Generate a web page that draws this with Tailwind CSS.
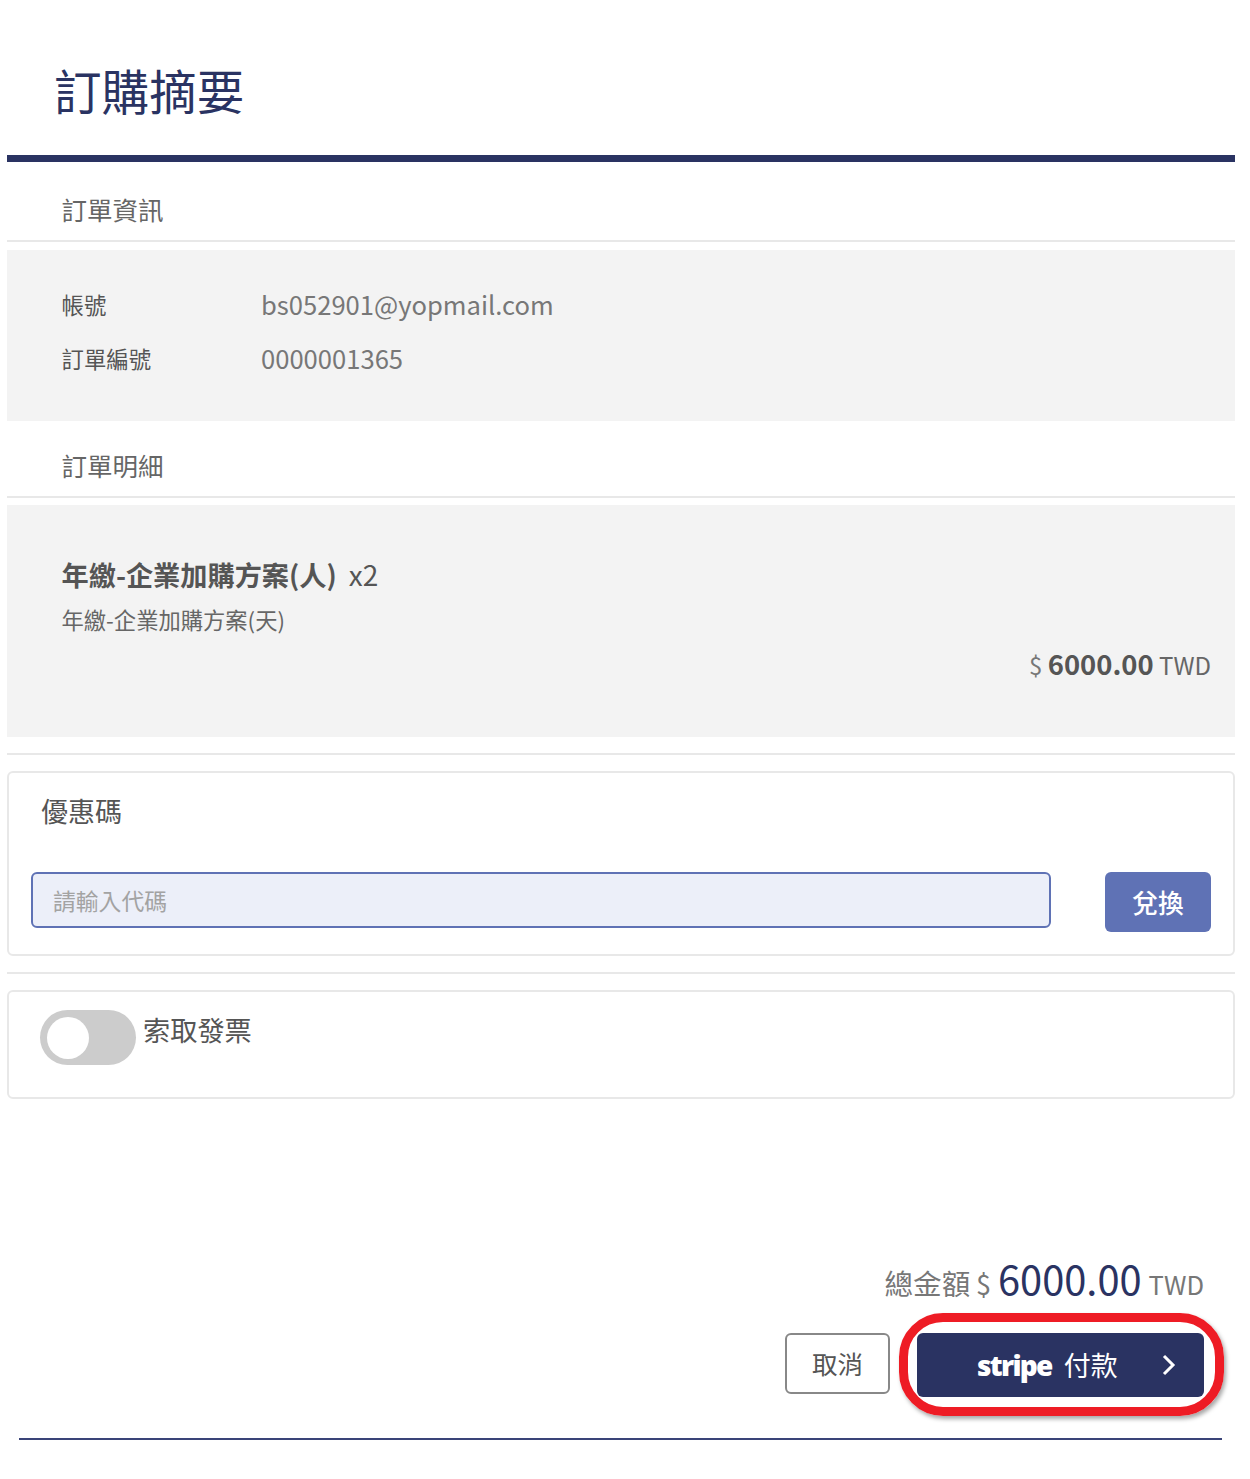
<!DOCTYPE html>
<html lang="zh-Hant">
<head>
<meta charset="utf-8">
<script src="https://cdn.jsdelivr.net/npm/@tailwindcss/browser@4"></script>
</head>
<body class="bg-white">
<div class="w-[1250px] h-[1479px] overflow-hidden pl-[7px] pr-[15px] font-['Noto_Sans_CJK_TC','Noto_Sans',sans-serif] text-[#666]">
  <div class="h-[155px] pl-[47px] pt-[56px] text-[47.6px] leading-[68px] text-[#2a3362]">訂購摘要</div>
  <div class="h-[7px] bg-[#2a3362]"></div>
  <div class="h-[80px] pl-[54.5px] pt-[28.5px] text-[25.5px] leading-[36px] border-b-2 border-[#e8e8e8]">訂單資訊</div>
  <div class="mt-[8px] h-[171px] bg-[#f3f3f3] pl-[54.5px] pt-[32px]">
    <div class="flex h-[44px] items-center"><div class="w-[199.5px] text-[22.4px] text-[#555] leading-[44px]">帳號</div><div class="text-[25.6px] leading-[44px] text-[#777]">bs052901@yopmail.com</div></div>
    <div class="flex h-[44px] mt-[10px] items-center"><div class="w-[199.5px] text-[22.4px] text-[#555] leading-[44px]">訂單編號</div><div class="text-[25.6px] leading-[44px] text-[#777]">0000001365</div></div>
  </div>
  <div class="h-[77px] pl-[54.5px] pt-[25.5px] text-[25.5px] leading-[36px] border-b-2 border-[#e8e8e8]">訂單明細</div>
  <div class="mt-[7px] h-[232px] bg-[#f3f3f3] pl-[54.5px] pr-[24px] pt-[47px] flex flex-col">
    <div class="text-[27.2px] leading-[44px] text-[#555] flex"><span class="font-bold">年繳-企業加購方案(人)</span><span class="ml-[12px] text-[28px]">x2</span></div>
    <div class="text-[22.3px] leading-[32px] mt-[7px] text-[#666]">年繳-企業加購方案(天)</div>
    <div class="text-right text-[24px] leading-[44px] mt-[6px] text-[#777]">$ <span class="font-bold text-[27.4px] text-[#555]">6000.00</span> <span class="text-[#666]">TWD</span></div>
  </div>
  <div class="mt-[16px] border-t-2 border-[#e8e8e8]"></div>
  <div class="mt-[16px] h-[185px] border-2 border-[#e8e8e8] rounded-[6px] pl-[22px] pr-[22px] pt-[18px] relative">
    <div class="pl-[10px] text-[27px] leading-[40px] text-[#555]">優惠碼</div>
    <div class="flex justify-between items-start mt-[41px]">
      <input class="w-[1020px] h-[56px] rounded-[6px] border-2 border-[#5f72b5] bg-[#eceff9] pl-[20px] text-[22.8px] placeholder:text-[#a3a3a3] outline-none" placeholder="請輸入代碼">
      <button class="w-[106px] h-[60px] rounded-[6px] bg-[#5f72b5] text-white text-[25.7px] font-medium">兌換</button>
    </div>
  </div>
  <div class="mt-[16px] border-t-2 border-[#e8e8e8]"></div>
  <div class="mt-[16px] h-[109px] border-2 border-[#e8e8e8] rounded-[6px] pl-[31px] pt-[18px] flex items-start gap-[7px]">
    <div class="w-[96px] h-[55px] rounded-full bg-[#cccccc] flex items-center pl-[7px]"><div class="w-[42px] h-[42px] rounded-full bg-white"></div></div>
    <div class="text-[27.2px] leading-[38px] text-[#555]">索取發票</div>
  </div>
  <div class="mt-[149px] pr-[31px] flex justify-end items-baseline gap-[7px] text-[#777] text-[25.6px] leading-[60px]"><span><span class="text-[28.6px]">總金額</span> <span class="text-[27px]">$</span></span><span class="text-[39.8px] text-[#2a3362]">6000.00</span><span>TWD</span></div>
  <div class="mt-[19px] pr-[31px] flex justify-end gap-[27px] relative">
    <button class="w-[105px] h-[61px] rounded-[6px] border-2 border-[#888] bg-white text-[25.5px] text-[#555]">取消</button>
    <button class="w-[287px] h-[64px] rounded-[6px] bg-[#2a3362] text-white flex items-center pl-[60px] relative">
      <span class="font-['Noto_Sans',sans-serif] font-black text-[28px] tracking-[-1.7px]">stripe</span>
      <span class="ml-[12px] text-[27px]">付款</span>
      <svg class="absolute right-[28px] top-[21px]" width="14" height="22" viewBox="0 0 14 22" fill="none" stroke="white" stroke-width="3"><path d="M2 2l9 9-9 9"/></svg>
    </button>
    <div class="absolute right-[11px] top-[-20px] w-[325px] h-[103px] rounded-[44px] border-[9px] border-[#ee1c25] shadow-[2px_3px_4px_rgba(0,0,0,0.35)]"></div>
  </div>
  <div class="mt-[41px] ml-[12px] mr-[13px] border-t-2 border-[#3a4478]"></div>
</div>
</body>
</html>
